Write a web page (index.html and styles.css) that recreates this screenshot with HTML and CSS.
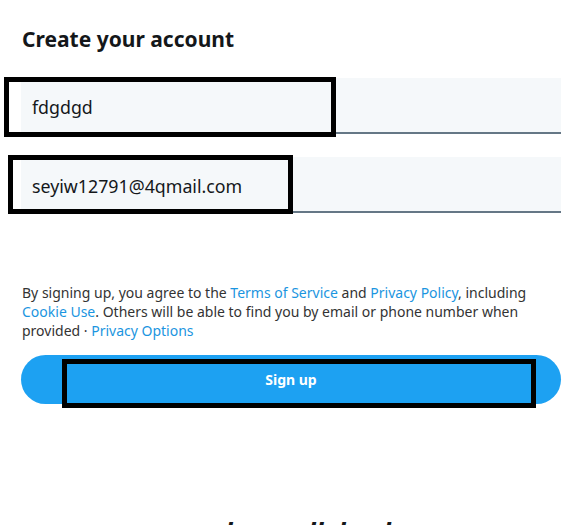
FILE: index.html
```html
<!DOCTYPE html>
<html lang="en">
    <head>
        <meta charset="UTF-8">
        <meta name="viewport" content="width=device-width, initial-scale=1.0">
        <title>Create your account</title>
        <link rel="stylesheet" href="styles.css">
    </head>
    <body>
        <div class="signup">
            <h1 class="title">Create your account</h1>
            <div class="field">
                <input type="text" class="field-input" value="fdgdgd">
            </div>
            <div class="field">
                <input type="text" class="field-input" value="seyiw12791@4qmail.com">
            </div>
            <p class="terms">
                By signing up, you agree to the <a href="#">Terms of Service</a> and <a href="#">Privacy Policy</a>, including<br>
                <a href="#">Cookie Use</a>. Others will be able to find you by email or phone number when<br>
                provided · <a href="#">Privacy Options</a>
            </p>
            <button class="signup-btn">Sign up</button>
            <div class="next-title">dove tall dead</div>
        </div>
        <!-- highlight boxes drawn over the form -->
        <div class="mark mark-name"></div>
        <div class="mark mark-email"></div>
        <div class="mark mark-button"></div>
    </body>
</html>
```

FILE: styles.css
```css
body {
    margin: 0;
    background-color: #fff;
    font-family: "Noto Sans", "Open Sans", sans-serif;
    color: #14171a;
    position: relative;
    overflow: hidden;
    height: 525px;
}
.signup {
    width: 540px;
    padding: 22px 0 0 21px;
}
.title {
    margin: 0 0 0 1px;
    font-size: 21px;
    font-weight: 700;
    line-height: 34px;
}
.field {
    margin-top: 22px;
    background-color: #f5f8fa;
    border-bottom: 2px solid #657786;
    height: 54px;
}
.field + .field {
    margin-top: 23px;
}
.field-input {
    width: 100%;
    height: 100%;
    box-sizing: border-box;
    border: none;
    background: transparent;
    padding: 4px 11px 0;
    font-family: inherit;
    font-size: 17.8px;
    color: #14171a;
    outline: none;
}
.terms {
    margin: 70px 0 0 1px;
    font-size: 14px;
    line-height: 19px;
    color: #333;
    white-space: nowrap;
}
.terms a {
    color: #1b95e0;
    text-decoration: none;
}
.signup-btn {
    display: block;
    width: 100%;
    height: 49px;
    margin-top: 15px;
    border: none;
    border-radius: 25px;
    background-color: #1da1f2;
    color: #fff;
    font-family: inherit;
    font-size: 14px;
    font-weight: 700;
}
.next-title {
    margin: 111px 0 0 196px;
    font-size: 26px;
    font-weight: 700;
    font-style: italic;
    line-height: 36px;
    white-space: nowrap;
}
.mark {
    position: absolute;
    box-sizing: border-box;
    border: 5px solid #000;
}
.mark-name {
    left: 4px;
    top: 77px;
    width: 332px;
    height: 60px;
}
.mark-email {
    left: 8px;
    top: 155px;
    width: 285px;
    height: 59px;
}
.mark-button {
    left: 62px;
    top: 359px;
    width: 474px;
    height: 49px;
}
```
